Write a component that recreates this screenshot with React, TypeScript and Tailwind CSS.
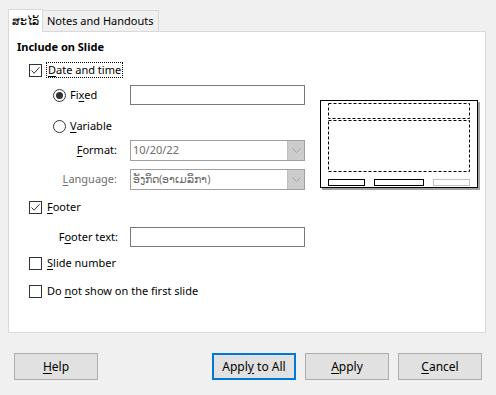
import React from 'react';

const font = { fontFamily: '"Noto Sans", "Liberation Sans", sans-serif' };

const Checkbox: React.FC<{ checked?: boolean }> = ({ checked }) => (
  <span className="w-[13px] h-[13px] border border-[#333333] bg-white flex items-center justify-center shrink-0">
    {checked && (
      <svg width="11" height="11" viewBox="0 0 11 11">
        <path d="M1.5 5.5 L4.2 8.2 L9.5 2.2" fill="none" stroke="#333333" strokeWidth="1" />
      </svg>
    )}
  </span>
);

const Radio: React.FC<{ checked?: boolean }> = ({ checked }) => (
  <span className="w-[13px] h-[13px] rounded-full border border-[#333333] bg-white flex items-center justify-center shrink-0">
    {checked && <span className="w-[7px] h-[7px] rounded-full bg-[#333333]" />}
  </span>
);

const Combo: React.FC<{ value: string }> = ({ value }) => (
  <div className="w-[175px] h-[21px] border border-[#a0a0a0] bg-white flex items-stretch">
    <span className="flex-1 pl-[2px] flex items-center text-[#6d6d6d] whitespace-nowrap overflow-hidden">{value}</span>
    <span className="w-[17px] bg-[#cccccc] border-l border-[#bfbfbf] flex items-center justify-center">
      <svg width="9" height="6" viewBox="0 0 9 6">
        <path d="M0.5 0.5 L4.5 4.5 L8.5 0.5" fill="none" stroke="#a3a3a3" strokeWidth="1" />
      </svg>
    </span>
  </div>
);

const Button: React.FC<{ children: React.ReactNode; def?: boolean }> = ({ children, def }) => (
  <button
    className={`w-[84px] h-[27px] bg-[#e1e1e1] text-[12px] text-black flex items-center justify-center ${
      def ? 'border-2 border-[#0078d7]' : 'border border-[#adadad]'
    }`}
  >
    <span>{children}</span>
  </button>
);

const Preview: React.FC = () => (
  <svg width="160" height="90" viewBox="0 0 160 90">
    <rect x="2" y="2" width="158" height="88" fill="#a0a0a0" />
    <rect x="0.5" y="0.5" width="157" height="87" fill="#ffffff" stroke="#000000" strokeWidth="1" />
    <rect x="8.5" y="3.5" width="141" height="15" fill="none" stroke="#000000" strokeDasharray="3 2" />
    <rect x="8.5" y="20.5" width="141" height="51" fill="none" stroke="#000000" strokeDasharray="3 2" />
    <rect x="8.5" y="79.5" width="36" height="6" fill="none" stroke="#000000" />
    <rect x="54.5" y="79.5" width="49" height="6" fill="none" stroke="#000000" />
    <rect x="113.5" y="79.5" width="36" height="6" fill="none" stroke="#c0c0c0" />
  </svg>
);

const App: React.FC = () => {
  return (
    <div className="w-[496px] h-[395px] bg-[#f0f0f0] pt-[9px] px-[8px] text-[11px] text-black" style={font}>
      {/* Tabs */}
      <div className="flex items-end h-[22px] relative z-10">
        <div className="h-[23px] px-[3px] bg-white border border-b-0 border-[#d9d9d9] flex items-center -mb-px">
          ສະໄລ້
        </div>
        <div className="h-[21px] px-[4px] bg-[#f0f0f0] border border-l-0 border-b-0 border-[#d9d9d9] flex items-center">
          Notes and Handouts
        </div>
      </div>

      {/* Panel */}
      <div className="h-[302px] w-[478px] bg-white border border-[#d9d9d9] pt-[7px] px-[8px] flex">
        <div className="w-[288px] flex flex-col">
          <div className="h-[16px] font-bold leading-[16px]">Include on Slide</div>

          <div className="h-[20px] mt-[5px] ml-[12px] flex items-center gap-[4px]">
            <Checkbox checked />
            <span className="border border-dotted border-black px-[1px] leading-[14px]">
              <u className="underline-offset-2">D</u>ate and time
            </span>
          </div>

          <div className="h-[20px] mt-[5px] ml-[36px] flex items-center">
            <Radio checked />
            <span className="ml-[4px] w-[60px]">
              Fi<u className="underline-offset-2">x</u>ed
            </span>
            <div className="w-[175px] h-[20px] border border-[#7a7a7a] bg-white" />
          </div>

          <div className="h-[20px] mt-[11px] ml-[36px] flex items-center">
            <Radio />
            <span className="ml-[4px]">
              <u className="underline-offset-2">V</u>ariable
            </span>
          </div>

          <div className="h-[21px] mt-[4px] flex items-center">
            <span className="w-[101px] text-right pr-[1px]">
              <u className="underline-offset-2">F</u>ormat:
            </span>
            <span className="ml-[12px]">
              <Combo value="10/20/22" />
            </span>
          </div>

          <div className="h-[21px] mt-[8px] flex items-center">
            <span className="w-[101px] text-right pr-[1px] text-[#6d6d6d]">
              <u className="underline-offset-2">L</u>anguage:
            </span>
            <span className="ml-[12px]">
              <Combo value="ອັງກິດ(ອາເມລິກາ)" />
            </span>
          </div>

          <div className="h-[20px] mt-[7px] ml-[12px] flex items-center gap-[5px]">
            <Checkbox checked />
            <span>
              <u className="underline-offset-2">F</u>ooter
            </span>
          </div>

          <div className="h-[20px] mt-[10px] flex items-center">
            <span className="w-[102px] text-right pr-[1px]">
              F<u className="underline-offset-2">o</u>oter text:
            </span>
            <div className="ml-[11px] w-[175px] h-[20px] border border-[#7a7a7a] bg-white" />
          </div>

          <div className="h-[20px] mt-[6px] ml-[12px] flex items-center gap-[5px]">
            <Checkbox />
            <span>
              <u className="underline-offset-2">S</u>lide number
            </span>
          </div>

          <div className="h-[20px] mt-[8px] ml-[12px] flex items-center gap-[5px]">
            <Checkbox />
            <span>
              Do <u className="underline-offset-2">n</u>ot show on the first slide
            </span>
          </div>
        </div>

        <div className="ml-[15px] mt-[61px]">
          <Preview />
        </div>
      </div>

      {/* Buttons */}
      <div className="mt-[20px] flex items-center px-[6px]">
        <Button>
          <u className="underline-offset-2">H</u>elp
        </Button>
        <div className="flex-1" />
        <div className="flex gap-[9px]">
          <Button def>
            Appl<u className="underline-offset-2">y</u> to All
          </Button>
          <Button>
            <u className="underline-offset-2">A</u>pply
          </Button>
          <Button>
            <u className="underline-offset-2">C</u>ancel
          </Button>
        </div>
      </div>
    </div>
  );
};

export default App;
